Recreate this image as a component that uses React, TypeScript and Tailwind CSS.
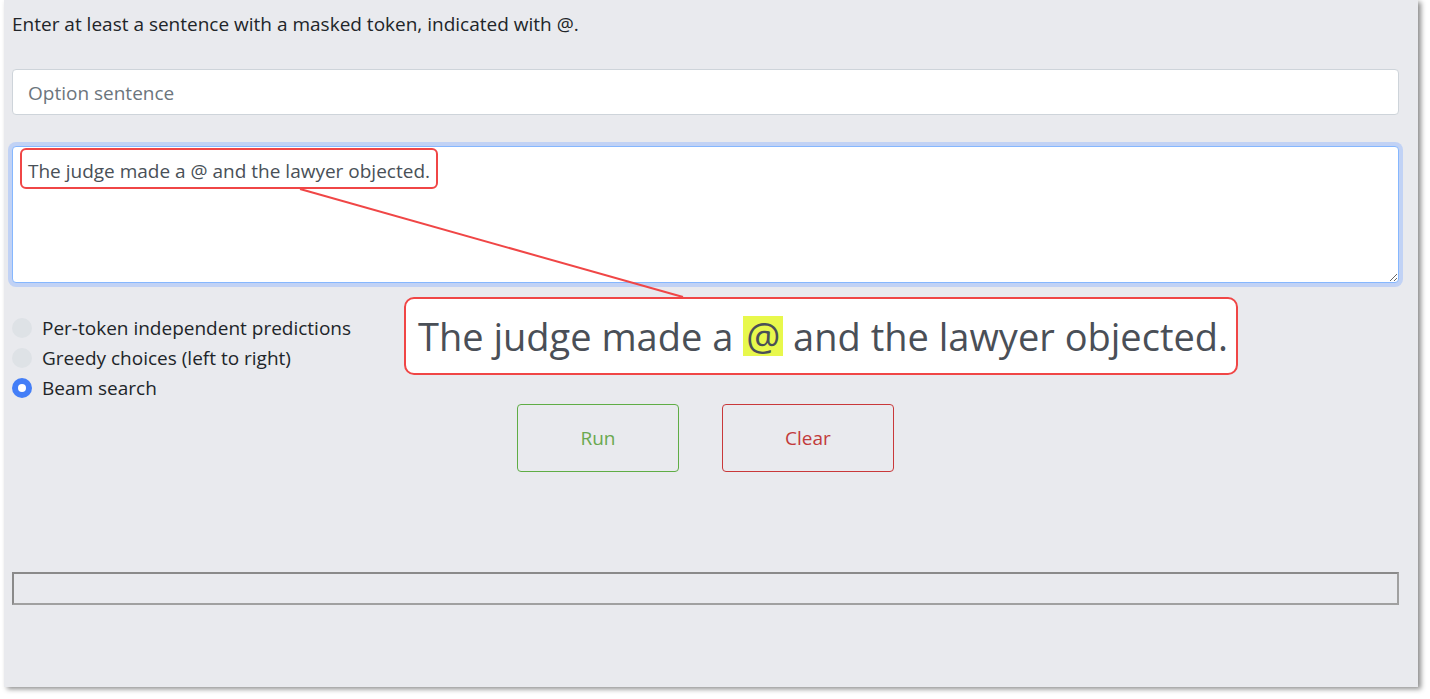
import { useState } from "react";

const SENTENCE = "The judge made a @ and the lawyer objected.";

const modes = [
  "Per-token independent predictions",
  "Greedy choices (left to right)",
  "Beam search",
];

export default function App() {
  const [mode, setMode] = useState(2);
  const [text, setText] = useState(SENTENCE);
  const [before, after] = SENTENCE.split("@");

  return (
    <div className="min-h-screen bg-white font-['Open_Sans','Noto_Sans',sans-serif] text-[19px]">
      <div className="relative ml-[4px] h-[687px] w-[1414px] bg-[#e9eaee] px-[8px] pt-[12px] shadow-[3px_2px_5px_rgba(0,0,0,0.45)]">
        <p className="leading-[24px] text-[#212529]">Enter at least a sentence with a masked token, indicated with @.</p>

        <input
          placeholder="Option sentence"
          className="mt-[33px] block h-[46px] w-[1387px] rounded-[4px] border border-[#ced4da] bg-white px-[15px] pt-[1px] text-[#495057] placeholder:text-[#6c757d] outline-none"
        />

        <textarea
          value={text}
          onChange={(e) => setText(e.target.value)}
          className="mt-[31px] block h-[137px] w-[1387px] rounded-[4px] border border-[#86b7fe] bg-white px-[15px] py-[12px] leading-[24px] text-[#495057] shadow-[0_0_0_4px_#c1d2f5] outline-none"
        />

        <div className="mt-[30px] flex flex-col">
          {modes.map((m, i) => (
            <label key={m} className="flex h-[30px] cursor-pointer items-center gap-[10px] text-[#212529]">
              <span
                onClick={() => setMode(i)}
                className={`flex h-[20px] w-[20px] items-center justify-center rounded-full ${
                  mode === i ? "bg-[#437ef7]" : "bg-[#dee2e6]"
                }`}
              >
                {mode === i && <span className="h-[8px] w-[8px] rounded-full bg-white" />}
              </span>
              {m}
            </label>
          ))}
        </div>

        <div className="mt-[1px] flex">
          <button className="ml-[505px] h-[68px] w-[162px] rounded-[4px] border border-[#5fad45] text-[#6aa84f]">Run</button>
          <button
            onClick={() => setText("")}
            className="ml-[43px] h-[68px] w-[172px] rounded-[4px] border border-[#c9383a] text-[#c23b3b]"
          >
            Clear
          </button>
        </div>

        <div className="mt-[100px] h-[33px] w-[1387px] border-2 border-[#8a8a8a] border-b-[#a0a0a0] border-r-[#a0a0a0]" />

        {/* annotation overlay */}
        <div className="pointer-events-none absolute left-[16px] top-[148px] h-[41px] w-[418px] rounded-[6px] border-2 border-[#f04646]" />
        <svg className="pointer-events-none absolute left-0 top-0" width="1414" height="400">
          <line x1="296" y1="189" x2="679" y2="297" stroke="#f04646" strokeWidth="2" />
        </svg>
        <div className="pointer-events-none absolute left-[400px] top-[297px] flex h-[78px] w-[834px] items-center rounded-[10px] border-2 border-[#f04646] bg-white pl-[12px] text-[38px] text-[#4a4f57]">
          <span className="whitespace-pre">{before}</span>
          <span className="bg-[#e8f84c] px-[3px] leading-[40px]">@</span>
          <span className="whitespace-pre">{after}</span>
        </div>
      </div>
    </div>
  );
}
